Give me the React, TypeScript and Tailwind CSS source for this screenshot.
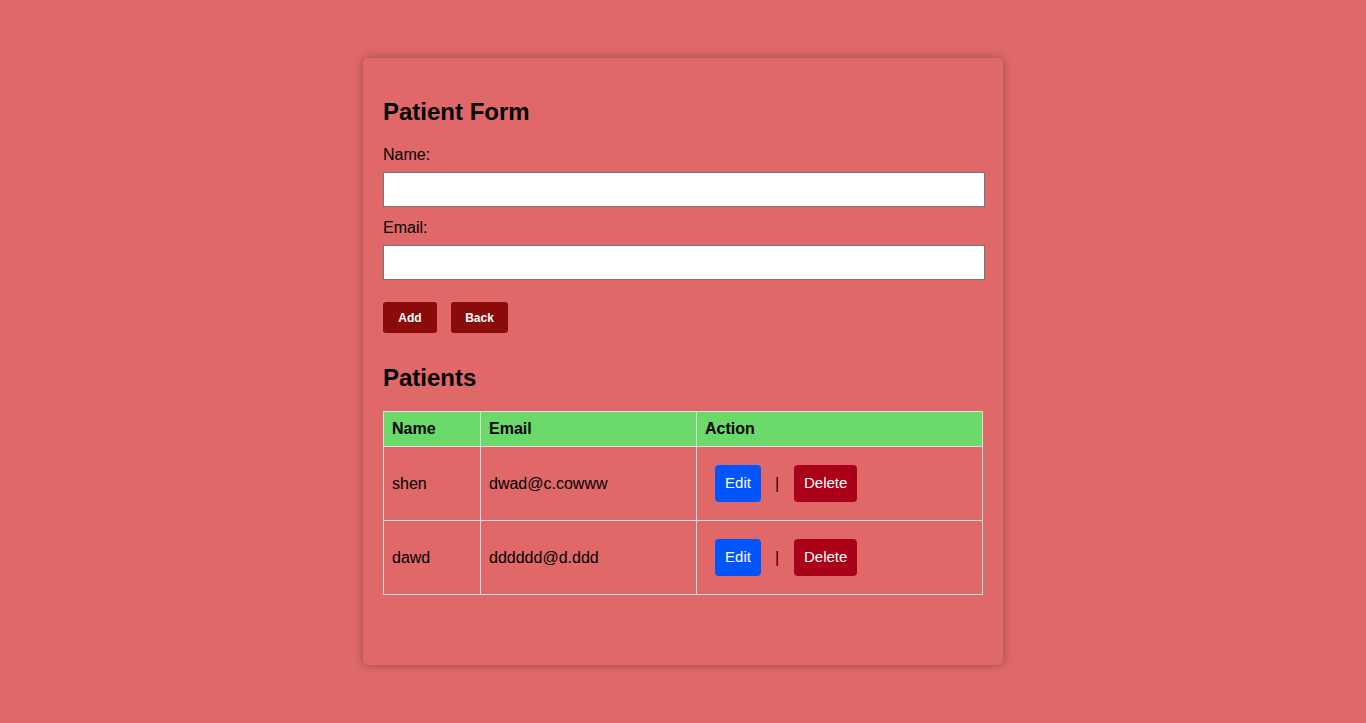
export default function App() {
  const patients = [
    { name: "shen", email: "dwad@c.cowww" },
    { name: "dawd", email: "dddddd@d.ddd" },
  ];

  return (
    <main className="min-h-screen bg-[#e06868] font-['Liberation_Sans',Arial,sans-serif] text-black">
      <div className="pt-[58px] flex justify-center">
        <div className="w-[640px] h-[607px] bg-[#e06868] rounded-[5px] shadow-[0_0_10px_rgba(0,0,0,0.3)] px-[20px] pt-[40px]">
          <h2 className="text-[24px] leading-[28px] font-bold">Patient Form</h2>

          <label className="block mt-[20px] text-[16px] leading-[18px]">Name:</label>
          <input
            type="text"
            className="block mt-[8px] w-[602px] h-[35px] bg-white border border-[#767676] outline-none"
          />

          <label className="block mt-[12px] text-[16px] leading-[18px]">Email:</label>
          <input
            type="text"
            className="block mt-[8px] w-[602px] h-[35px] bg-white border border-[#767676] outline-none"
          />

          <div className="mt-[22px] flex gap-[14px]">
            <button className="h-[31px] w-[54px] rounded-[3px] bg-[#8b0a0a] text-white text-[12px] font-bold">
              Add
            </button>
            <button className="h-[31px] w-[57px] rounded-[3px] bg-[#8b0a0a] text-white text-[12px] font-bold">
              Back
            </button>
          </div>

          <h2 className="mt-[31px] text-[24px] leading-[28px] font-bold">Patients</h2>

          <table className="mt-[19px] w-[600px] border-collapse text-[16px]">
            <thead>
              <tr className="bg-[#6ad96a] h-[35px]">
                <th className="w-[97px] border border-[#dddddd] px-[8px] text-left font-bold">Name</th>
                <th className="w-[216px] border border-[#dddddd] px-[8px] text-left font-bold">Email</th>
                <th className="border border-[#dddddd] px-[8px] text-left font-bold">Action</th>
              </tr>
            </thead>
            <tbody>
              {patients.map((p) => (
                <tr key={p.name} className="h-[74px]">
                  <td className="border border-[#dddddd] px-[8px]">{p.name}</td>
                  <td className="border border-[#dddddd] px-[8px]">{p.email}</td>
                  <td className="border border-[#dddddd] px-[8px]">
                    <div className="flex items-center">
                      <button className="ml-[10px] h-[37px] w-[46px] rounded-[4px] bg-[#0055ff] text-white text-[15px]">
                        Edit
                      </button>
                      <span className="ml-[14px] mr-[15px] text-[16px] text-[#3a0000]">|</span>
                      <button className="h-[37px] w-[63px] rounded-[4px] bg-[#aa0018] text-white text-[15px]">
                        Delete
                      </button>
                    </div>
                  </td>
                </tr>
              ))}
            </tbody>
          </table>
        </div>
      </div>
    </main>
  );
}
